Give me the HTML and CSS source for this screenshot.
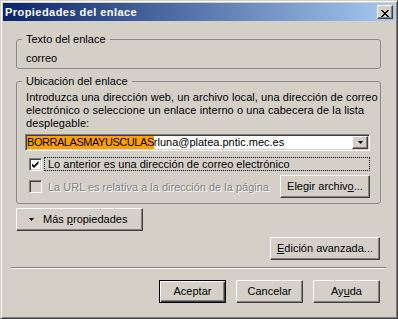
FILE: index.html
```html
<!DOCTYPE html>
<html lang="es">
<head>
<meta charset="utf-8">
<title>Propiedades del enlace</title>
<link rel="stylesheet" href="styles.css">
</head>
<body>
<div class="window">
  <div class="titlebar">
    <span class="title">Propiedades del enlace</span>
    <button class="btn close" type="button" aria-label="Cerrar">
      <svg class="x-icon" width="8" height="7" viewBox="0 0 8 7"><path d="M0 0h2v1H0zM6 0h2v1H6zM1 1h2v1H1zM5 1h2v1H5zM2 2h4v1H2zM3 3h2v1H3zM2 4h4v1H2zM1 5h2v1H1zM5 5h2v1H5zM0 6h2v1H0zM6 6h2v1H6z" fill="#000"/></svg>
    </button>
  </div>
  <div class="content">
    <fieldset class="group g1">
      <legend>Texto del enlace</legend>
      <div class="group-body g1-body">correo</div>
    </fieldset>
    <fieldset class="group g2">
      <legend>Ubicación del enlace</legend>
      <div class="group-body g2-body">
        <p class="desc">Introduzca una dirección web, un archivo local, una dirección de correo<br>electrónico o seleccione un enlace interno o una cabecera de la lista<br>desplegable:</p>
        <div class="combo">
          <span class="combo-text"><span class="hl">BORRALASMAYUSCULAS</span>rluna@platea.pntic.mec.es</span>
          <span class="btn combo-btn"><svg width="5" height="3" viewBox="0 0 5 3"><path d="M0 0h5L2.5 3z" fill="#000"/></svg></span>
        </div>
        <label class="check-row">
          <span class="box checked"><svg width="9" height="9" viewBox="0 0 9 9"><path d="M1 3.5l2 2L7.5 1v2.5L3 8 1 6z" fill="#000"/></svg></span>
          <span class="focus">Lo anterior es una dirección de correo electrónico</span>
        </label>
        <div class="row2">
          <label class="check-row disabled">
            <span class="box"></span>
            <span class="dis-text">La URL es relativa a la dirección de la página</span>
          </label>
          <button class="btn choose" type="button">Elegir archiv<u>o</u>...</button>
        </div>
      </div>
    </fieldset>
    <button class="btn more" type="button"><svg width="5" height="3" viewBox="0 0 5 3"><path d="M0 0h5L2.5 3z" fill="#000"/></svg><span>Más <u>p</u>ropiedades</span></button>
    <div class="adv-row">
      <button class="btn adv" type="button"><u>E</u>dición avanzada...</button>
    </div>
    <div class="sep"></div>
    <div class="actions">
      <button class="btn action default" type="button">Aceptar</button>
      <button class="btn action" type="button">Cancelar</button>
      <button class="btn action" type="button">Ay<u>u</u>da</button>
    </div>
  </div>
</div>
</body>
</html>
```
FILE: styles.css
```css
* { box-sizing: border-box; }

html, body {
  margin: 0;
  padding: 0;
  background: #d4d0c8;
}

.window {
  width: 398px;
  height: 319px;
  border: 1px solid;
  border-color: #d4d0c8 #404040 #404040 #d4d0c8;
  box-shadow: inset 1px 1px #fff, inset -1px -1px #808080;
  padding: 2px;
  background: #d4d0c8;
  display: flex;
  flex-direction: column;
  font: 11px "Liberation Sans", Arial, sans-serif;
  color: #000;
}

.titlebar {
  height: 18px;
  flex: none;
  display: flex;
  align-items: center;
  justify-content: space-between;
  background: linear-gradient(to right, #0a246a, #a6caf0);
}

.title {
  color: #fff;
  font-weight: bold;
  letter-spacing: 0.45px;
  line-height: 18px;
  padding-left: 2px;
}

.btn {
  font: inherit;
  color: #000;
  background: #d4d0c8;
  border: 1px solid;
  border-color: #fff #404040 #404040 #fff;
  box-shadow: inset -1px -1px #808080;
  padding: 0;
  margin: 0;
  line-height: 13px;
}

.btn u { text-decoration: underline; text-underline-offset: 1px; }

.close {
  width: 16px;
  height: 14px;
  margin-right: 2px;
  display: block;
}

.x-icon {
  display: block;
  margin: 2px 0 0 3px;
}

.content {
  flex: 1;
  padding: 12px 14px 0 13px;
  display: flex;
  flex-direction: column;
}

.group {
  margin: 0;
  padding: 0;
  min-width: 0;
  border: 1px solid #8a8a8a;
  border-radius: 3px;
}

.group legend {
  margin-left: 5px;
  padding: 0 4px;
  line-height: 13px;
}

.g1-body {
  padding: 6px 9px 3px;
  line-height: 13px;
}

.g2 { margin-top: 6px; }

.g2-body {
  padding: 3px 10px 5px 8px;
}

.desc {
  margin: 0;
  padding-left: 1px;
  line-height: 13px;
  letter-spacing: 0.07px;
  white-space: nowrap;
}

.combo {
  margin-top: 4px;
  height: 17px;
  border: 1px solid;
  border-color: #808080 #fff #fff #808080;
  box-shadow: inset 1px 1px #404040, inset -1px -1px #d4d0c8;
  background: #fff;
  padding: 1px;
  display: flex;
}

.combo-text {
  flex: 1;
  line-height: 13px;
  white-space: nowrap;
  overflow: hidden;
}

.hl {
  display: inline-block;
  background: #ffa000;
  line-height: 13px;
  letter-spacing: -0.45px;
}

.combo-btn {
  width: 16px;
  height: 13px;
  display: flex;
  align-items: center;
  justify-content: center;
}

.combo-btn svg { display: block; }

.check-row {
  display: flex;
  align-items: center;
  margin-top: 6px;
  height: 14px;
}

.box {
  width: 13px;
  height: 13px;
  margin-left: 4px;
  flex: none;
  border: 1px solid;
  border-color: #808080 #fff #fff #808080;
  box-shadow: inset 1px 1px #404040, inset -1px -1px #d4d0c8;
  background: #fff;
  display: flex;
  align-items: center;
  justify-content: center;
}

.box svg { display: block; margin: 1px 0 0 0; }

.focus {
  flex: 1;
  margin-left: 2px;
  border: 1px dotted #000;
  padding-left: 3px;
  line-height: 12px;
  height: 14px;
}

.row2 {
  margin-top: 4px;
  display: flex;
  align-items: center;
  justify-content: space-between;
}

.row2 .check-row { margin-top: 0; }

.disabled .box { background: #d4d0c8; }

.dis-text {
  margin-left: 6px;
  color: #808080;
  text-shadow: 1px 1px 0 #fff;
}

.choose {
  width: 90px;
  height: 23px;
}

.more {
  margin-top: 4px;
  width: 127px;
  height: 23px;
  align-self: flex-start;
  display: flex;
  align-items: center;
  padding-left: 12px;
}

.more svg { display: block; margin-right: 9px; }

.adv-row {
  display: flex;
  justify-content: flex-end;
  margin-top: 6px;
}

.adv {
  width: 110px;
  height: 23px;
  margin-right: 1px;
}

.sep {
  margin: 7px -5px 0;
  height: 2px;
  border-top: 1px solid #808080;
  border-bottom: 1px solid #fff;
}

.actions {
  display: flex;
  justify-content: flex-end;
  gap: 10px;
  margin-top: 11px;
  padding-right: 1px;
}

.action {
  width: 67px;
  height: 23px;
}

.default {
  border: 1px solid #000;
  box-shadow: inset 1px 1px #fff, inset -1px -1px #404040, inset -2px -2px #808080;
}
```
